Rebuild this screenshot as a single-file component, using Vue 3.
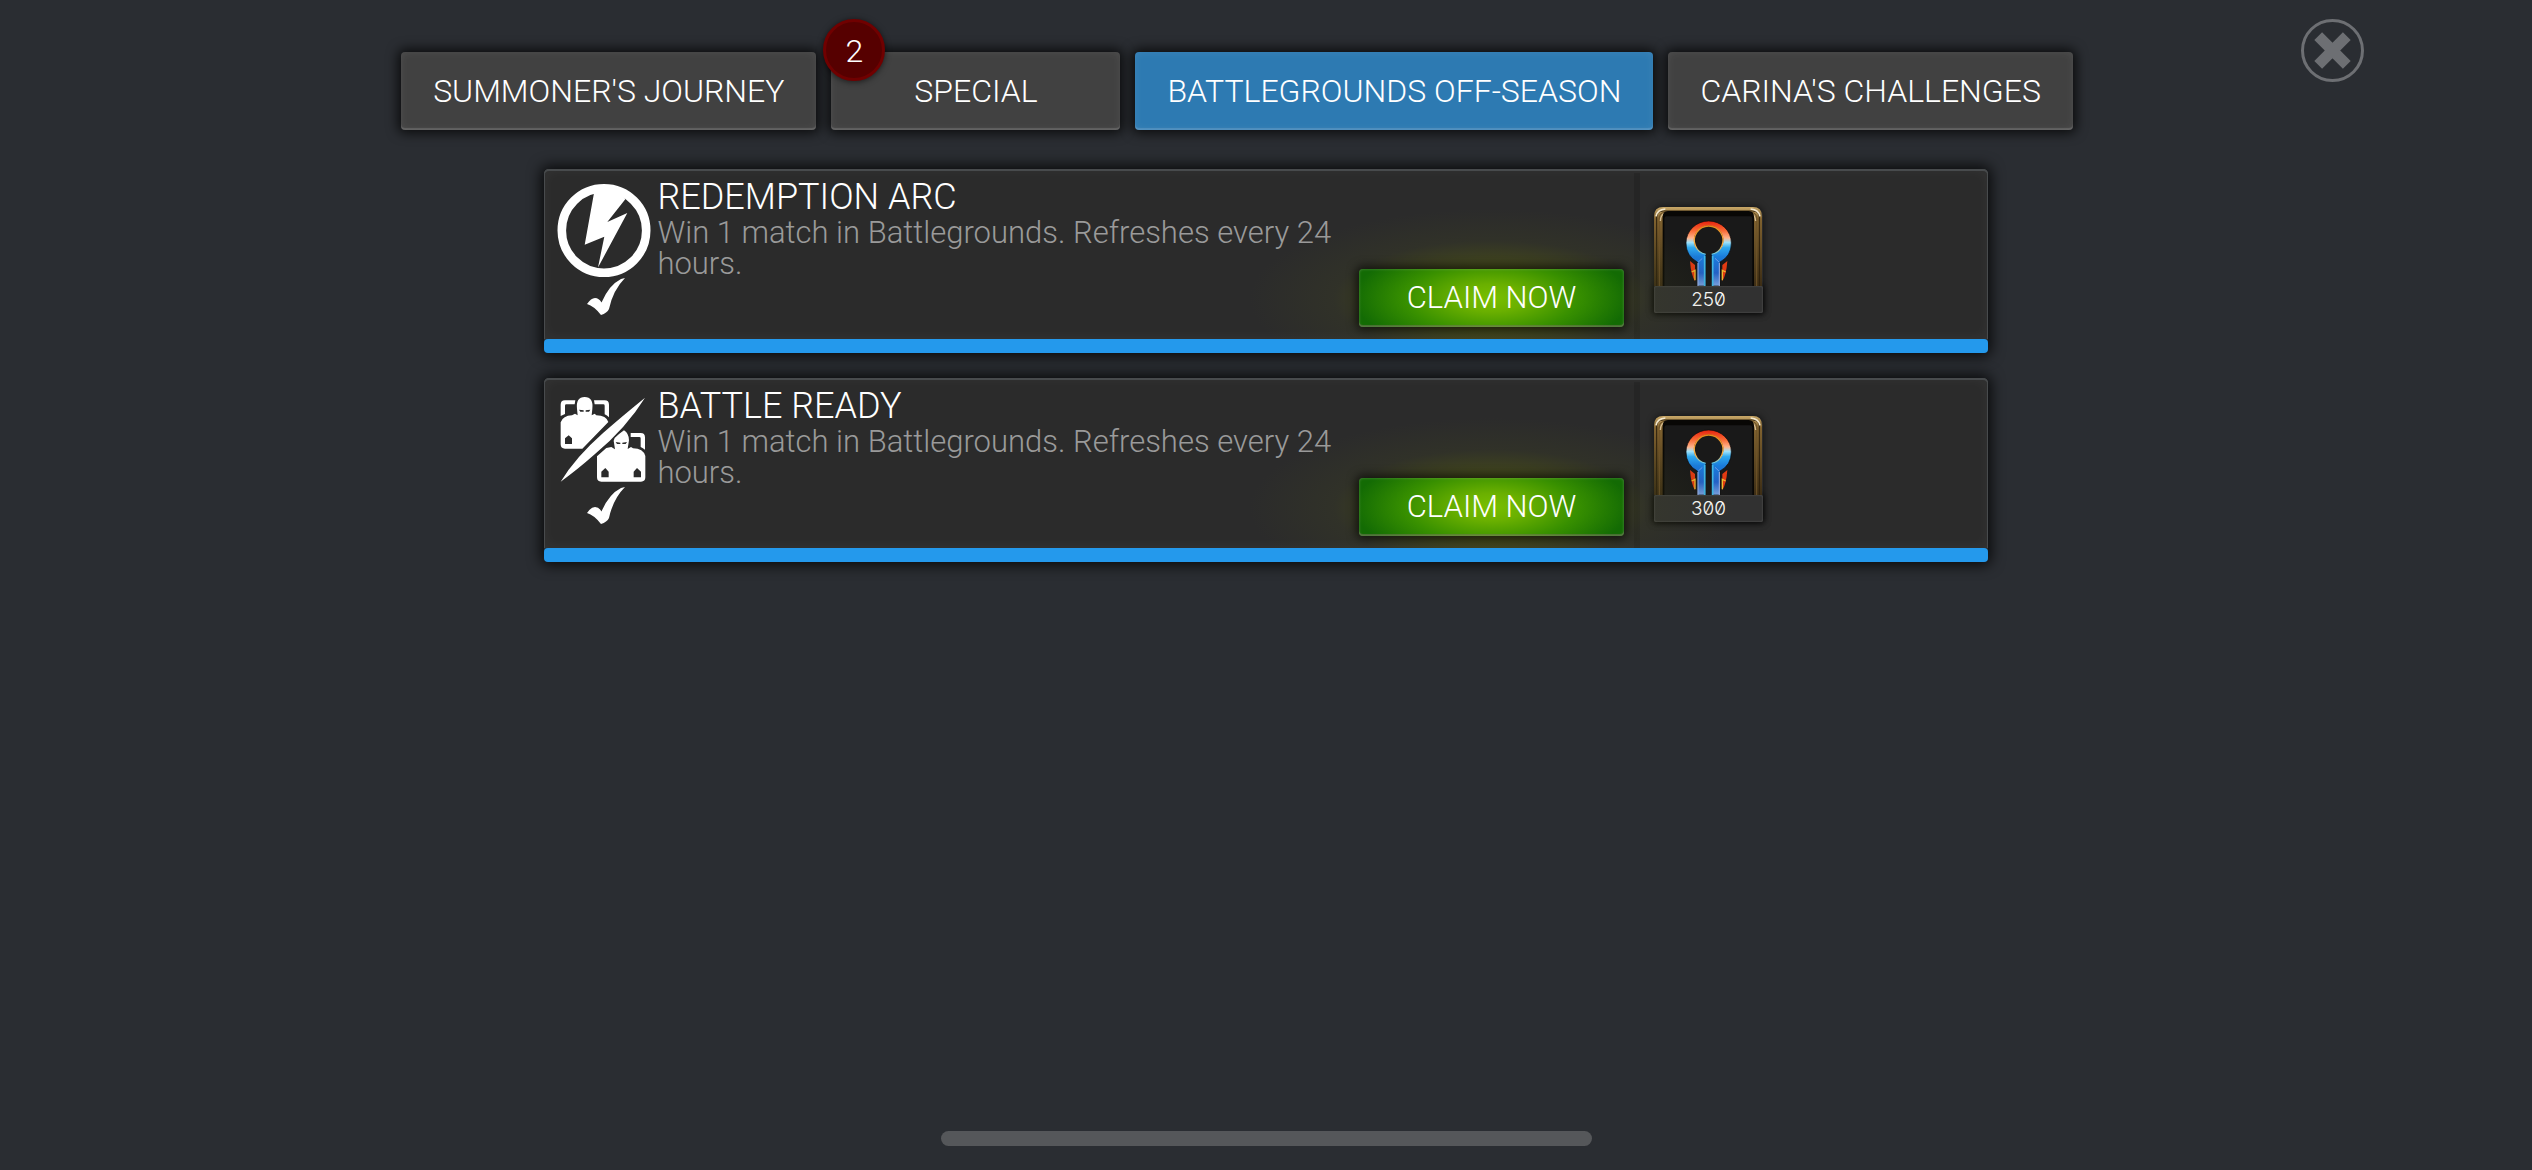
<template>
  <div class="screen">
    <header class="top-bar">
      <nav class="tabs">
        <button
          v-for="tab in tabs"
          :key="tab.id"
          type="button"
          class="tab"
          :class="{ active: tab.id === activeTab }"
          @click="activeTab = tab.id"
        >
          {{ tab.label }}
          <span v-if="tab.count" class="badge">{{ tab.count }}</span>
        </button>
      </nav>
      <button type="button" class="close" aria-label="Close">
        <svg viewBox="0 0 63 63" width="63" height="63">
          <circle cx="31.5" cy="31.5" r="30" fill="none" stroke="#6d6f73" stroke-width="3" />
          <path d="M17.2 17.2 L45.8 45.8 M45.8 17.2 L17.2 45.8" stroke="#6d6f73" stroke-width="11" />
        </svg>
      </button>
    </header>

    <main class="quests">
      <article v-for="quest in quests" :key="quest.title" class="card">
        <div class="card-body">
          <div class="icons">
            <!-- lightning in a ring -->
            <svg v-if="quest.icon === 'bolt'" viewBox="0 0 94 94" width="94" height="94">
              <circle cx="47" cy="46.5" r="42.2" fill="none" stroke="#fff" stroke-width="8.6" />
              <path d="M37 9 L27.7 60.7 L47.3 52.7 L41 83.5 L70.3 29 L50.3 38 L68.5 15 L58 6 L40 6 Z" fill="#fff" />
            </svg>
            <!-- two fighters split by a slash -->
            <svg v-else viewBox="51 69 282 282" width="94" height="94">
              <g fill="#fff">
                <path d="M62 138 V104 Q62 91 75 91 H106 L104 103 H79 Q75 103 75 107 V132 Z" />
                <path d="M162 91 H194 Q207 91 207 104 V142 Q201 136 194 133 V107 Q194 103 190 103 H164 Z" />
                <path d="M111 117 Q107 81 134 81 Q161 81 157 117 L155 136 L164 131 L169 136 Q199 137 205 156 L127 236 H75 Q62 236 62 223 V157 Q69 137 96 136 L105 131 L113 136 Z" />
                <path d="M315 83 Q260 172 165 252 Q112 299 62 335 Q106 262 190 188 Q246 139 315 83 Z" />
                <path d="M272 189 H302 Q315 189 315 202 V239 Q309 234 302 231 V205 Q302 201 298 201 H272 Z" />
                <path d="M224 204 Q239 190 252 181 Q267 191 267 211 L263 237 L273 231 L279 235 Q310 236 316 258 V322 Q316 335 303 335 H184 Q171 335 171 322 V259 L199 234 L214 231 L225 238 L221 212 Z" />
              </g>
              <g fill="#2b2b2b">
                <path d="M117 119 L131 121 V125 H121 Z M151 119 L137 121 V125 H147 Z" />
                <path d="M227 216 L241 218 V222 H231 Z M261 216 L247 218 V222 H257 Z" />
                <path d="M75 205 L86 196 L96 205 V222 H75 Z" />
                <path d="M184 305 L196 294 L206 305 V322 H184 Z" />
                <path d="M281 305 L291 294 L303 305 V322 H281 Z" />
              </g>
            </svg>
            <svg class="check" viewBox="0 0 38 37" width="38" height="37">
              <path d="M0 26 Q4 20 8 20 Q12 20 14.5 24.5 Q22 7 34 1 L38 0 Q26 12 22 31 Q20 35 14 37 Q7 28 0 26 Z" fill="#fff" />
            </svg>
          </div>

          <div class="info">
            <h2>{{ quest.title }}</h2>
            <p>{{ quest.text }}</p>
          </div>

          <div class="action">
            <button type="button" class="claim">CLAIM NOW</button>
          </div>

          <div class="rewards">
            <div class="reward">
              <svg viewBox="42 48 327 237" width="109" height="79">
                <defs>
                  <linearGradient id="gold" x1="0" y1="0" x2="0" y2="1">
                    <stop offset="0" stop-color="#c9a868" />
                    <stop offset="0.15" stop-color="#80622f" />
                    <stop offset="1" stop-color="#3c2d15" />
                  </linearGradient>
                  <linearGradient id="flame" gradientUnits="userSpaceOnUse" x1="0" y1="90" x2="0" y2="285">
                    <stop offset="0" stop-color="#e5210c" />
                    <stop offset="0.15" stop-color="#fa6a35" />
                    <stop offset="0.26" stop-color="#ffb28a" />
                    <stop offset="0.33" stop-color="#9fe2fb" />
                    <stop offset="0.41" stop-color="#2fa9ef" />
                    <stop offset="0.55" stop-color="#1a7cdb" />
                    <stop offset="0.8" stop-color="#2362c8" />
                    <stop offset="1" stop-color="#7ba3e2" />
                  </linearGradient>
                  <linearGradient id="rim" gradientUnits="userSpaceOnUse" x1="0" y1="106" x2="0" y2="190">
                    <stop offset="0" stop-color="#e08a1c" />
                    <stop offset="0.7" stop-color="#ffb347" />
                    <stop offset="1" stop-color="#5cc9ef" />
                  </linearGradient>
                </defs>
                <path d="M42 285 V76 Q42 48 70 48 H338 Q366 48 366 76 V285 Z" fill="url(#gold)" />
                <path d="M50 285 V78 Q50 60 70 60 H338 Q358 60 358 78 V285" fill="none" stroke="#2a1e0c" stroke-width="3" />
                <path d="M58 285 V82 Q58 64 76 64 H332 Q350 64 350 82 V285" fill="none" stroke="#6f5429" stroke-width="3" />
                <path d="M48 76 Q52 56 76 54 M332 54 Q356 56 360 76" fill="none" stroke="#f5e9cf" stroke-width="5" />
                <path d="M61 90 Q61 72 76 66 M332 66 Q346 72 347 90" fill="none" stroke="#d5bd92" stroke-width="4" />
                <path d="M68 285 V78 Q68 60 84 60 H326 Q342 60 342 78 V285 Z" fill="#080705" />
                <path d="M73 285 V83 Q73 76 80 76 H330 Q337 76 337 83 V285 Z" fill="#191919" />
                <path
                  d="M197 190 A43 43 0 1 1 215 190 V285 H240 V213 Q274 195 274 156 A68 66 0 0 0 138 156 Q138 195 172 213 V285 H197 Z"
                  fill="url(#flame)"
                  stroke="#0b0b0e"
                  stroke-width="2"
                />
                <path d="M197 190 A43 43 0 1 1 215 190" fill="none" stroke="url(#rim)" stroke-width="4" />
                <path d="M194 194 V285 M218 194 V285" stroke="#3fb8e6" stroke-width="5" />
                <path d="M174 216 V285 M238 216 V285" stroke="#9fb2e4" stroke-width="3" />
                <path d="M187 202 L174 214 M225 202 L238 214" stroke="#6f9be8" stroke-width="3" />
                <path d="M150 210 L165 222 V270 Q153 252 150 210 Z M262 210 L247 222 V270 Q259 252 262 210 Z" fill="#e23a12" />
                <path d="M155 243 L165 238 V268 M257 243 L247 238 V268" fill="none" stroke="#f0b82e" stroke-width="4" />
              </svg>
              <span class="amount">{{ quest.amount }}</span>
            </div>
          </div>
        </div>
        <div class="progress"></div>
      </article>
    </main>

    <div class="home-bar"></div>
  </div>
</template>

<script setup>
import { ref } from 'vue'

const activeTab = ref('battlegrounds')

const tabs = [
  { id: 'journey', label: "SUMMONER'S JOURNEY" },
  { id: 'special', label: 'SPECIAL', count: 2 },
  { id: 'battlegrounds', label: 'BATTLEGROUNDS OFF-SEASON' },
  { id: 'carina', label: "CARINA'S CHALLENGES" }
]

const quests = [
  {
    title: 'REDEMPTION ARC',
    text: 'Win 1 match in Battlegrounds. Refreshes every 24 hours.',
    icon: 'bolt',
    amount: 250
  },
  {
    title: 'BATTLE READY',
    text: 'Win 1 match in Battlegrounds. Refreshes every 24 hours.',
    icon: 'fighters',
    amount: 300
  }
]
</script>

<style>
body {
  background: #2a2d32;
}
</style>

<style scoped>
.screen {
  display: flex;
  flex-direction: column;
  min-height: 100vh;
  box-sizing: border-box;
  padding-bottom: 24px;
  background: #2a2d32;
  color: #fff;
  font-family: Roboto, "Liberation Sans", sans-serif;
  font-weight: 300;
}

button {
  font: inherit;
  color: inherit;
  border: none;
  cursor: pointer;
}

svg {
  display: block;
}

/* top bar */
.top-bar {
  display: grid;
  grid-template-columns: 1fr auto 1fr;
  align-items: start;
  padding: 19px 168px 0 110px;
}

.tabs {
  grid-column: 2;
  display: flex;
  gap: 15px;
  margin-top: 33px;
}

.tab {
  position: relative;
  min-width: 289px;
  height: 78px;
  padding: 0 32px;
  background: #414141;
  border-radius: 4px;
  box-shadow: 0 0 12px 3px rgba(0, 0, 0, 0.75), inset 0 0 8px rgba(255, 255, 255, 0.08), inset 0 -2px 1px rgba(255, 255, 255, 0.15);
  font-size: 32px;
  white-space: nowrap;
}

.tab.active {
  background: #2d7ab2;
}

.badge {
  position: absolute;
  left: -8px;
  top: -33px;
  width: 62px;
  height: 62px;
  box-sizing: border-box;
  border: 3px solid #700000;
  border-radius: 50%;
  background: #560000;
  box-shadow: 0 1px 6px rgba(0, 0, 0, 0.6);
  line-height: 58px;
  text-align: center;
}

.close {
  grid-column: 3;
  justify-self: end;
  padding: 0;
  background: none;
}

/* quest cards */
.quests {
  display: flex;
  flex-direction: column;
  gap: 25px;
  width: 57%;
  margin: 39px auto 0;
}

.card {
  border-radius: 5px;
  box-shadow: 0 0 14px 3px rgba(0, 0, 0, 0.8);
}

.card-body {
  display: flex;
  min-height: 170px;
  overflow: hidden;
  background: #2b2b2b;
  border-radius: 5px 5px 0 0;
  box-shadow: inset 0 2px 0 #484b4d, inset 1px 0 0 #484b4d, inset -1px 0 0 #484b4d, inset 0 0 14px rgba(255, 255, 255, 0.05);
}

.icons {
  display: flex;
  flex-direction: column;
  width: 100px;
  padding: 15px 0 0 13px;
}

.check {
  margin-left: 30px;
}

.info {
  flex: 1;
  padding-top: 9px;
}

.info h2 {
  margin: 0;
  font-size: 36px;
  line-height: 39px;
  font-weight: 300;
}

.info p {
  margin: 0;
  color: #9a9a9a;
  font-size: 31px;
  line-height: 31px;
}

.action {
  position: relative;
  z-index: 0;
  display: flex;
  align-items: flex-end;
  padding: 0 10px 12px 0;
}

/* soft light behind the claim button */
.action::before {
  content: "";
  position: absolute;
  z-index: -1;
  left: -110px;
  right: -100px;
  bottom: -50px;
  height: 180px;
  background: radial-gradient(ellipse closest-side, rgba(110, 125, 0, 0.75) 0%, rgba(95, 105, 10, 0.4) 40%, rgba(70, 75, 30, 0.2) 65%, rgba(60, 60, 40, 0) 100%);
}

.claim {
  width: 265px;
  height: 58px;
  padding: 0;
  border-radius: 4px;
  background: radial-gradient(ellipse 52% 95% at center, #78bf00 0%, #6ab000 25%, #389000 62%, #136b04 100%);
  box-shadow: 0 0 10px 3px rgba(0, 0, 0, 0.65), inset 0 0 3px rgba(255, 255, 255, 0.25), inset 0 -2px 0 rgba(110, 110, 80, 0.5);
  font-size: 31px;
  line-height: 56px;
}

.rewards {
  display: flex;
  align-items: center;
  width: 24.5%;
  box-sizing: border-box;
  margin-top: 4px;
  padding: 8px 0 0 14px;
  border-left: 6px solid rgba(0, 0, 0, 0.12);
}

.reward {
  width: 109px;
  box-shadow: 0 0 6px 1px rgba(0, 0, 0, 0.5);
  border-radius: 9px 9px 2px 2px;
}

.amount {
  display: block;
  height: 27px;
  background: #313131;
  border-radius: 2px;
  box-shadow: 0 0 6px 1px rgba(0, 0, 0, 0.7), inset 0 0 2px rgba(255, 255, 255, 0.25);
  font-family: Inter, sans-serif;
  font-feature-settings: "zero";
  font-size: 19px;
  line-height: 27px;
  text-align: center;
}

.progress {
  height: 14px;
  background: #2499ec;
  border-radius: 4px;
}

.home-bar {
  width: 651px;
  max-width: 60%;
  height: 15px;
  margin: auto auto 0;
  border-radius: 8px;
  background: #55575a;
}
</style>
